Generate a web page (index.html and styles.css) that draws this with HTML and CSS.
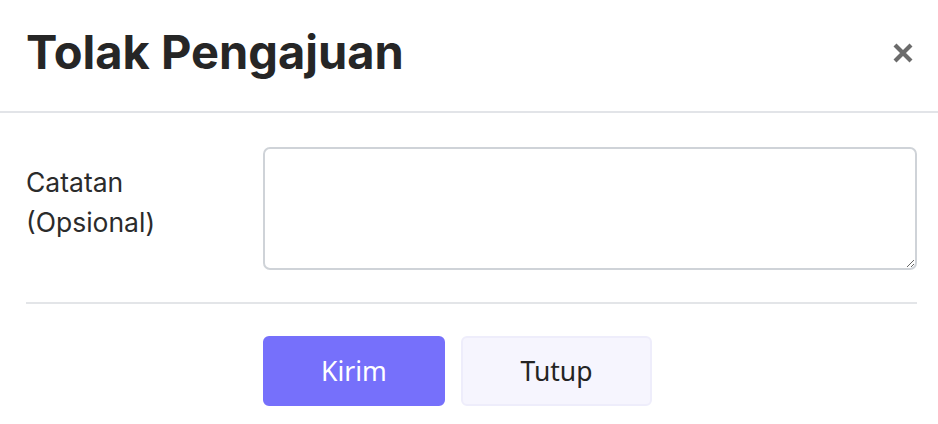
FILE: index.html
```html
<!DOCTYPE html>
<html lang="id">
<head>
<meta charset="utf-8">
<title>Tolak Pengajuan</title>
<link rel="stylesheet" href="styles.css">
</head>
<body>
<div class="modal">
  <div class="modal-header">
    <h1 class="modal-title">Tolak Pengajuan</h1>
    <button class="close" type="button" aria-label="Close">
      <svg width="22" height="22" viewBox="0 0 22 22"><path d="M3 3 L19 19 M19 3 L3 19" stroke="#6b6b6b" stroke-width="4.2" stroke-linecap="butt"/></svg>
    </button>
  </div>
  <div class="modal-body">
    <div class="form-row">
      <label class="form-label" for="catatan">Catatan<br>(Opsional)</label>
      <textarea id="catatan" class="form-control"></textarea>
    </div>
    <hr class="divider">
    <div class="actions">
      <button class="btn btn-primary" type="button">Kirim</button>
      <button class="btn btn-light" type="button">Tutup</button>
    </div>
  </div>
</div>
</body>
</html>
```

FILE: styles.css
```css
* { box-sizing: border-box; }
html, body { margin: 0; padding: 0; background: #fff; }
body { font-family: Inter, "Noto Sans", sans-serif; color: #2b2b2b; }
.modal { width: 938px; height: 424px; }
.modal-header {
  height: 113px;
  border-bottom: 2px solid #e2e4e8;
  display: flex;
  align-items: center;
  justify-content: space-between;
  padding: 0 24px 8px 26px;
}
.modal-title {
  margin: 0;
  font-family: Inter, "Liberation Sans", sans-serif;
  font-weight: 700;
  font-size: 47px;
  color: #262626;
}
.close {
  background: none;
  border: 0;
  padding: 0;
  width: 22px;
  height: 22px;
  display: flex;
  margin-top: 2px;
}
.modal-body { padding: 34px 21px 0 26px; }
.form-row { display: flex; }
.form-label {
  width: 237px;
  flex: none;
  font-family: Inter, "Noto Sans", sans-serif;
  font-size: 26.5px;
  line-height: 40px;
  padding-top: 15px;
  color: #2b2b2b;
}
.form-control {
  flex: 1;
  height: 123px;
  border: 2px solid #cfd3d8;
  border-radius: 7px;
  resize: vertical;
  font: inherit;
  margin: 0;
}
.divider {
  margin: 32px 0 0 0;
  border: 0;
  border-top: 2px solid #e3e5e8;
}
.actions {
  display: flex;
  gap: 16px;
  margin-top: 32px;
  padding-left: 237px;
}
.btn {
  height: 70px;
  border-radius: 6px;
  font-family: "Noto Sans", "Open Sans", sans-serif;
  font-size: 26.5px;
  display: flex;
  align-items: center;
  justify-content: center;
  padding: 0;
  cursor: pointer;
}
.btn-primary {
  width: 182px;
  background: #7670fb;
  border: 2px solid #7670fb;
  color: #fff;
}
.btn-light {
  width: 191px;
  background: #f6f5fe;
  border: 2px solid #eeedfb;
  color: #242424;
}
```
